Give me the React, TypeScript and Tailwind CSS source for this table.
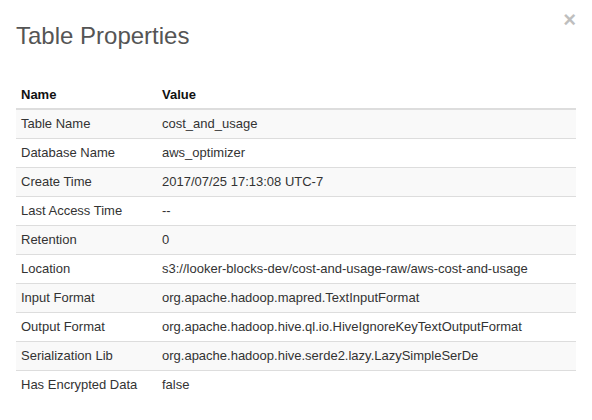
// Table Properties modal
const rows: Array<[string, string]> = [
  ["Table Name", "cost_and_usage"],
  ["Database Name", "aws_optimizer"],
  ["Create Time", "2017/07/25 17:13:08 UTC-7"],
  ["Last Access Time", "--"],
  ["Retention", "0"],
  ["Location", "s3://looker-blocks-dev/cost-and-usage-raw/aws-cost-and-usage"],
  ["Input Format", "org.apache.hadoop.mapred.TextInputFormat"],
  ["Output Format", "org.apache.hadoop.hive.ql.io.HiveIgnoreKeyTextOutputFormat"],
  ["Serialization Lib", "org.apache.hadoop.hive.serde2.lazy.LazySimpleSerDe"],
  ["Has Encrypted Data", "false"],
];

export default function App() {
  return (
    <div className="w-[592px] h-[420px] bg-white px-4 font-['Liberation_Sans',Arial,sans-serif] text-[#333]">
      <div className="flex items-start justify-between pt-[23px]">
        <h4 className="text-[24px] leading-[1.1] text-[#555]">Table Properties</h4>
        <button className="mt-[-14px] mr-0 text-[22px] font-bold leading-none text-black opacity-25">
          ×
        </button>
      </div>

      <table className="mt-[31px] w-[560px] border-collapse text-[13px]">
        <thead>
          <tr className="border-b-2 border-[#ddd]">
            <th className="h-[29px] w-[141px] px-[5px] text-left font-bold text-[#111]">Name</th>
            <th className="h-[29px] px-[5px] text-left font-bold text-[#111]">Value</th>
          </tr>
        </thead>
        <tbody>
          {rows.map(([name, value], i) => (
            <tr
              key={name}
              className={
                (i % 2 === 0 ? "bg-[#f9f9f9] " : "") +
                (i < rows.length - 1 ? "border-b border-[#ddd]" : "")
              }
            >
              <td className="h-[29px] px-[5px] whitespace-nowrap">{name}</td>
              <td className="h-[29px] px-[5px] whitespace-nowrap">{value}</td>
            </tr>
          ))}
        </tbody>
      </table>
    </div>
  );
}
